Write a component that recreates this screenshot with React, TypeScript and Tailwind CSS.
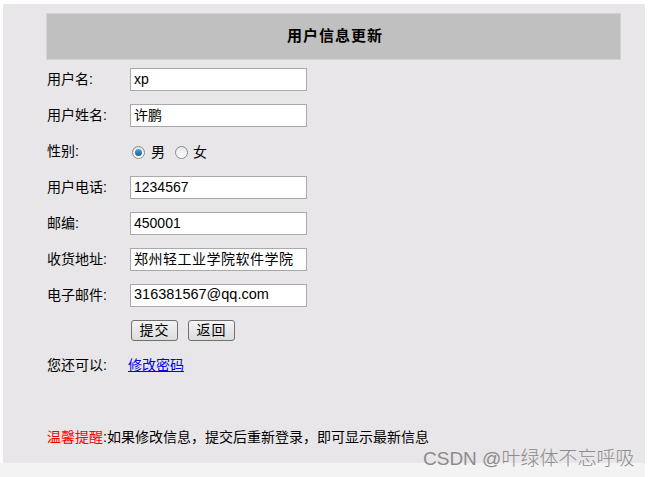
import React from 'react';

const cjk = "font-['Liberation_Sans','Noto_Sans_CJK_SC',sans-serif]";

const rows: { label: string; value?: string; wide?: boolean }[] = [
  { label: '用户名:', value: 'xp' },
  { label: '用户姓名:', value: '许鹏' },
  { label: '性别:' },
  { label: '用户电话:', value: '1234567' },
  { label: '邮编:', value: '450001' },
  { label: '收货地址:', value: '郑州轻工业学院软件学院', wide: true },
  { label: '电子邮件:', value: '316381567@qq.com' },
];

const Radio = ({ checked }: { checked?: boolean }) => (
  <span className="w-[13px] h-[13px] rounded-full border border-[#8a8a8a] bg-gradient-to-b from-[#e6e6e6] to-white flex items-center justify-center">
    {checked && <span className="w-[7px] h-[7px] rounded-full bg-gradient-to-b from-[#4aa3e0] to-[#1a5f9e]" />}
  </span>
);

const Button = ({ children }: { children: React.ReactNode }) => (
  <button className="h-[21px] w-[47px] border border-[#707070] rounded-[3px] bg-gradient-to-b from-[#f4f4f4] to-[#dcdcdc] text-[14px] text-black leading-none tracking-[1px]">
    {children}
  </button>
);

export default function App() {
  return (
    <div className={`w-[651px] h-[477px] bg-white overflow-hidden relative ${cjk} text-black`}>
      <div className="ml-[3px] mt-[4px] w-[642px] h-[459px] bg-[#e8e6e8] pt-[9px]">
        {/* Title bar */}
        <div className="ml-[43px] w-[575px] h-[47px] bg-[#c0c0c0] border border-[#d2d2d2] flex items-center justify-center">
          <span className="text-[15px] font-bold tracking-[1px] ml-[3px]">用户信息更新</span>
        </div>

        <div className="pl-[44px] pt-[1px]">
          {rows.map((r) => (
            <div key={r.label} className="h-[36px] flex items-center">
              <span className="w-[83px] text-[14px]">{r.label}</span>
              {r.value !== undefined ? (
                <div
                  className={`w-[177px] h-[23px] bg-white border border-[#a9a9a9] pl-[3px] flex items-center whitespace-nowrap overflow-hidden ${
                    r.wide ? 'tracking-[0.5px]' : ''
                  } ${r.value.includes('@') ? 'text-[14.5px]' : 'text-[14px]'}`}
                >
                  {r.value}
                </div>
              ) : (
                <div className="flex items-center text-[14px] pl-[2px] pt-[2px]">
                  <Radio checked />
                  <span className="ml-[6px] mr-[10px]">男</span>
                  <Radio />
                  <span className="ml-[5px]">女</span>
                </div>
              )}
            </div>
          ))}

          <div className="h-[34px] flex items-center pl-[84px] gap-[10px]">
            <Button>提交</Button>
            <Button>返回</Button>
          </div>

          <div className="h-[36px] flex items-center">
            <span className="w-[81px] text-[14px]">您还可以:</span>
            <a className="text-[14px] text-[#0000ee] underline" href="#">修改密码</a>
          </div>

          <div className="mt-[44px] h-[20px] flex items-center text-[14px]">
            <span className="text-[#ff0000]">温馨提醒</span>
            <span>:如果修改信息，提交后重新登录，即可显示最新信息</span>
          </div>
        </div>
      </div>
      <div className="w-[645px] h-[14px] bg-[#f3f3f3]" />

      {/* watermark */}
      <span className="absolute left-[423px] top-[445px] text-[19px] text-[#8c8c8c] whitespace-nowrap font-['Liberation_Sans','Noto_Sans_CJK_SC',sans-serif] font-light">
        CSDN @叶绿体不忘呼吸
      </span>
    </div>
  );
}
